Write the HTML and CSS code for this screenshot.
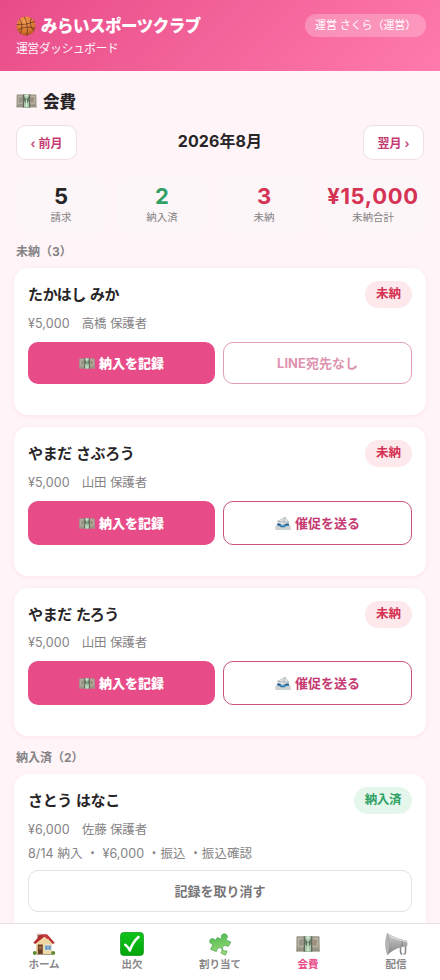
FILE: index.html
```html
<!DOCTYPE html>
<html lang="ja">
<head>
<meta charset="utf-8">
<meta name="viewport" content="width=device-width, initial-scale=1">
<title>会費</title>
<link rel="stylesheet" href="styles.css">
</head>
<body>
<svg class="defs" aria-hidden="true">
  <defs>
    <radialGradient id="ball-fill" cx=".45" cy=".3" r=".8"><stop offset="0" stop-color="#f7a055"/><stop offset=".6" stop-color="#db7630"/><stop offset="1" stop-color="#9a4518"/></radialGradient>
    <linearGradient id="green-fill" x1="0" y1="0" x2="0" y2="1"><stop offset="0" stop-color="#10c51b"/><stop offset="1" stop-color="#04a50c"/></linearGradient>
    <linearGradient id="puzzle-fill" x1="0" y1="0" x2=".4" y2="1"><stop offset="0" stop-color="#43b649"/><stop offset="1" stop-color="#98d878"/></linearGradient>
    <linearGradient id="horn-fill" x1="0" y1="0" x2="0" y2="1"><stop offset="0" stop-color="#d6d6d6"/><stop offset=".5" stop-color="#a8a8a8"/><stop offset="1" stop-color="#858585"/></linearGradient>
    <symbol id="ball" viewBox="0 0 20 20">
      <circle cx="10" cy="10" r="9.5" fill="url(#ball-fill)"/>
      <path d="M8.200.7Q12.500 8 11 19.400M.6 8.500Q9 9.500 19 5.500M3.300 3.400Q8 8 4.300 17.500M15.300 2.200Q12.500 9 18 15M1.800 14.200Q9 9 18.800 12.500" fill="none" stroke="#4d2c1c" stroke-width=".65"/>
    </symbol>
    <symbol id="money" viewBox="0 0 22 15">
      <path d="M.5.500h21l.3 14H.2z" fill="#a5a293"/>
      <path d="M1.200 1.300h19.600v9.700H1.200z" fill="#b9b6a6" stroke="#8b8877" stroke-width=".6"/>
      <path d="M.4 12.300h21.200M.3 13.500h21.400" stroke="#858171" stroke-width=".5"/>
      <path d="M2.500 4l4-1.500.5 6-4 1.500z" fill="#99958a"/><path d="M15.500 3l4 1-1 5.500-3.500-1z" fill="#a08d7c"/>
      <path d="M7 .5h8v14H7z" fill="#62685a"/>
      <path d="M8.300.5h5.400v14H8.300z" fill="#abc9ac"/>
      <path d="M9.300.5h3.400l-1.700 3z" fill="#dcebd9"/>
      <path d="M8.500 2.500l2.500 4 2.500-4v5l-2.500 3.500L8.500 7.500z" fill="#57705b"/>
      <path d="M10.300 6.500h1.400v7.800h-1.400z" fill="#d0ebce"/>
    </symbol>
    <symbol id="mail" viewBox="0 0 20 18">
      <path d="M1 12.500L3.500 8.500h13l2.500 4v4.500H1z" fill="#cfd4d8"/>
      <path d="M2.500 9h14.500l1 4-5.500 2H5z" fill="#1c5687"/>
      <path d="M3.500 11l7.500 3 6-2-2-1.500z" fill="#2f86bd"/>
      <path d="M3 6.200L12.500 1l5 6.500-8.500 4z" fill="#dee1e3" stroke="#a7aeb4" stroke-width=".6"/>
      <path d="M3 6.200l7.800 1L12.500 1M10.800 7.200l6.700.3" fill="none" stroke="#929ca4" stroke-width=".7"/>
      <path d="M.5 11.800h4.500l3 2h4l3-2h4.500v5.400H.5z" fill="#cdd2d5"/>
    </symbol>
    <symbol id="home" viewBox="0 0 24 24">
      <path d="M4 10.500L12 4l8 6.500V22H4z" fill="#eed7a3"/>
      <path d="M5.500 2.500h3.200v5H5.500z" fill="#a84b3f"/>
      <path d="M5 1.500h4.200v1.400H5z" fill="#d6c3ad"/>
      <path d="M1.300 10.700L8.800 2.400h6.500l7.500 8.600-2 1L14.200 5l-2-.2L3.200 12z" fill="#b52d31"/>
      <path d="M9 2.500h5.500L18 7l-3 0L12 4z" fill="#c8393c"/>
      <path d="M5.800 12.500h5v9.500h-5z" fill="#6f3e26"/><path d="M7 14.200h2.600v3H7z" fill="#9d7050"/>
      <path d="M12.800 13h6.400v5.300h-6.400z" fill="#5e91bf" stroke="#f5f1e3" stroke-width=".8"/>
      <path d="M16 13v5.300" stroke="#f5f1e3" stroke-width=".6"/>
      <circle cx="2.800" cy="21" r="2" fill="#5c8e31"/><circle cx="21.200" cy="21" r="2" fill="#5c8e31"/>
      <path d="M5 22.500h15" stroke="#a5a091"/>
    </symbol>
    <symbol id="check" viewBox="0 0 24 24">
      <rect x=".6" y=".6" width="22.800" height="22.800" rx="3" fill="url(#green-fill)" stroke="#079710" stroke-width=".8"/>
      <path d="M5.300 12.800Q7.800 14.500 9.800 18.500Q12.800 10 18.500 5" fill="none" stroke="#fff" stroke-width="2.500" stroke-linecap="round" stroke-linejoin="round"/>
    </symbol>
    <symbol id="puzzle" viewBox="0 0 24 24">
      <path d="M7.500 5.300L11 6.500c1-.4.300-1.300.3-2.400C11.400 1.800 13 .7 15 1c2.200.4 3 2.300 2 4-.6 1-.8 1.700.3 2.200l4 1.200-1.700 4.200c-.5 1-1.500.2-2.500 0-2-.4-3.200.7-3.400 2.300-.2 2 1.200 3.200 3 3 1-.2 2-.5 1.900.6L17.300 22l-4-1.300c-1-.5-.6-1.200-.1-2 .7-1.500 0-3-1.600-3.400-1.800-.4-3 .5-3.200 2.200-.1 1 .1 2-1 1.800L2 17.800l1.500-4.300c.4-.9-.2-1.100-1.200-1.300C.6 11.800-.2 10.200.4 8.600c.6-1.500 2.300-2.200 3.700-1.400.8.4 1.500 1.400 2 .5z" transform="rotate(6 12 12) translate(1.200 .5)" fill="url(#puzzle-fill)" stroke="#4ca652" stroke-width=".7"/>
    </symbol>
    <symbol id="horn" viewBox="0 0 24 24">
      <path d="M16.500 13.500v6q0 2 1.700 2.800M21.500 13v7.500q0 1.500-2 1.800" fill="none" stroke="#8a8a8a" stroke-width="1.600"/>
      <path d="M3.500 1C10 5 16 7.300 22.500 8.500q1.800 3 .2 6C15 15 8.500 18 3.500 23z" fill="url(#horn-fill)"/>
      <path d="M3.500 1Q7.500 12 3.500 23Q-.500 12 3.500 1z" fill="#b5b5b5" stroke="#9a9a9a" stroke-width=".5"/>
      <path d="M17.500 7.500q1.800 4 0 7.500" fill="none" stroke="#747474" stroke-width=".7"/>
      <path d="M6.500 4.500q7 3.500 15.500 5" fill="none" stroke="#e4e4e4"/>
    </symbol>
  </defs>
</svg>
<div class="app">
  <header class="header">
    <div>
      <div class="brand"><svg class="brand-icon"><use href="#ball"/></svg><span>みらいスポーツクラブ</span></div>
      <div class="subtitle">運営ダッシュボード</div>
    </div>
    <div class="user">運営 さくら（運営）</div>
  </header>
  <main class="main">
    <h1 class="title"><svg class="title-icon"><use href="#money"/></svg>会費</h1>
    <div class="month">
      <button class="month-btn">‹ 前月</button>
      <div class="month-label">2026年8月</div>
      <button class="month-btn">翌月 ›</button>
    </div>
    <div class="stats">
      <div class="stat"><b>5</b><span>請求</span></div>
      <div class="stat good"><b>2</b><span>納入済</span></div>
      <div class="stat bad"><b>3</b><span>未納</span></div>
      <div class="stat bad"><b class="total">¥15,000</b><span>未納合計</span></div>
    </div>
    <h2 class="section">未納（3）</h2>
    <section class="card compact">
      <div class="card-head"><div class="name">たかはし みか</div><span class="badge">未納</span></div>
      <div class="meta">¥5,000<span class="guardian">高橋 保護者</span></div>
      <div class="actions">
        <button class="btn primary"><svg class="btn-icon"><use href="#money"/></svg><span>納入を記録</span></button>
        <button class="btn outline disabled" disabled><span>LINE宛先なし</span></button>
      </div>
    </section>
    <section class="card">
      <div class="card-head"><div class="name">やまだ さぶろう</div><span class="badge">未納</span></div>
      <div class="meta">¥5,000<span class="guardian">山田 保護者</span></div>
      <div class="actions">
        <button class="btn primary"><svg class="btn-icon"><use href="#money"/></svg><span>納入を記録</span></button>
        <button class="btn outline"><svg class="btn-icon mail"><use href="#mail"/></svg><span>催促を送る</span></button>
      </div>
    </section>
    <section class="card last">
      <div class="card-head"><div class="name">やまだ たろう</div><span class="badge">未納</span></div>
      <div class="meta">¥5,000<span class="guardian">山田 保護者</span></div>
      <div class="actions">
        <button class="btn primary"><svg class="btn-icon"><use href="#money"/></svg><span>納入を記録</span></button>
        <button class="btn outline"><svg class="btn-icon mail"><use href="#mail"/></svg><span>催促を送る</span></button>
      </div>
    </section>
    <h2 class="section paid-section">納入済（2）</h2>
    <section class="card paid">
      <div class="card-head"><div class="name">さとう はなこ</div><span class="badge done">納入済</span></div>
      <div class="meta">¥6,000<span class="guardian">佐藤 保護者</span></div>
      <div class="meta record">8/14 納入 ・ ¥6,000 ・振込 ・振込確認</div>
      <button class="btn undo"><span>記録を取り消す</span></button>
    </section>
  </main>
  <nav class="tabs">
    <a class="tab"><svg><use href="#home"/></svg><span>ホーム</span></a>
    <a class="tab"><svg><use href="#check"/></svg><span>出欠</span></a>
    <a class="tab"><svg><use href="#puzzle"/></svg><span>割り当て</span></a>
    <a class="tab active"><svg><use href="#money"/></svg><span>会費</span></a>
    <a class="tab"><svg><use href="#horn"/></svg><span>配信</span></a>
  </nav>
</div>
</body>
</html>
```
FILE: styles.css
```css
* { box-sizing: border-box; }
body {
  margin: 0;
  font-family: Inter, "Noto Sans CJK JP", sans-serif;
  color: #272527;
  background: #fff4f8;
}
button { font-family: inherit; margin: 0; }
.defs { position: absolute; width: 0; height: 0; }
.app { height: 980px; display: flex; flex-direction: column; overflow: hidden; }

.header {
  flex: none;
  height: 71px;
  padding: 14px 14px 0 16px;
  display: flex;
  justify-content: space-between;
  align-items: flex-start;
  color: #fff;
  background: linear-gradient(135deg, #e84c88, #ff7aad);
}
.brand { display: flex; align-items: center; gap: 5px; height: 24px; line-height: 24px; font-size: 16.500px; font-weight: 800; letter-spacing: -.5px; white-space: nowrap; }
.brand-icon { width: 20px; height: 20px; }
.subtitle { height: 20px; line-height: 21px; font-size: 12px; letter-spacing: -.65px; opacity: .92; }
.user {
  width: 121px;
  height: 23px;
  line-height: 22px;
  padding-left: 10px;
  border-radius: 12px;
  font-size: 11px;
  letter-spacing: -.1px;
  white-space: nowrap;
  background: rgba(255, 255, 255, .25);
}

.main { flex: 1; min-height: 0; overflow: hidden; padding: 18px 14px 0; }
.title { margin: 0 2px; height: 24px; display: flex; align-items: center; gap: 6px; font-size: 16.500px; font-weight: 800; }
.title-icon { width: 21px; height: 14px; }
.month { margin: 12px 2px 0; display: flex; justify-content: space-between; }
.month-btn {
  width: 61px;
  height: 35px;
  padding: 0 0 1px;
  border: 1px solid #eee0e6;
  border-radius: 10px;
  background: #fff;
  color: #c53a70;
  font-size: 12px;
  font-weight: 600;
}
.month-label { line-height: 33px; font-size: 16px; font-weight: 700; letter-spacing: .1px; }

.stats { margin: 17px 0 0 2px; display: grid; grid-template-columns: 90px 92px 92px 1fr; gap: 10px; }
.stat { height: 56px; padding-top: 5px; border-radius: 10px; text-align: center; background: #fdf6f8; }
.stat b { display: block; height: 28px; line-height: 28px; font-size: 22px; font-weight: 700; white-space: nowrap; }
.stat .total { letter-spacing: .7px; }
.stat span { display: block; line-height: 15px; font-size: 10.500px; color: #858385; }
.good b { color: #32a166; }
.bad b { color: #d53354; }

.section { margin: 9px 2px 7px; height: 19px; line-height: 19px; font-size: 12px; font-weight: 700; color: #858385; }
.card {
  height: 149px;
  margin-bottom: 12px;
  padding: 13px 14px 0;
  border-radius: 14px;
  background: #fff;
  box-shadow: 0 1px 4px rgba(232, 76, 136, .09);
}
.card.compact { height: 147px; }
.card.last { height: 148px; }
.card.last .meta { margin-top: 4px; }
.paid-section { margin-top: 10px; }
.card.paid { height: 190px; }
.card-head { height: 27px; display: flex; justify-content: space-between; }
.name { line-height: 27px; font-size: 15px; font-weight: 600; letter-spacing: -.35px; word-spacing: .5px; }
.badge {
  height: 27px;
  line-height: 26px;
  padding: 0 11px;
  border-radius: 14px;
  font-size: 12.500px;
  font-weight: 700;
  color: #d53354;
  background: #fde8ec;
}
.badge.done { color: #32a166; background: #e5f7ed; letter-spacing: -.4px; }
.meta { margin-top: 5px; height: 20px; line-height: 21px; font-size: 12.500px; letter-spacing: .1px; color: #858385; }
.guardian { margin-left: 12px; letter-spacing: -.1px; }
.record { margin-top: 4px; white-space: pre; }
.actions { margin-top: 9px; display: grid; grid-template-columns: 187px 1fr; gap: 8px; }
.btn {
  height: 44px;
  padding: 0;
  display: flex;
  align-items: center;
  justify-content: center;
  gap: 4px;
  border-radius: 10px;
  font-size: 13px;
  font-weight: 700;
}
.btn span { padding-bottom: 2px; }
.compact .btn { height: 42px; }
.btn-icon { width: 16px; height: 11px; }
.btn-icon.mail { height: 15px; }
.primary { border: 0; color: #fff; background: #e84c88; }
.primary span { font-weight: 800; }
.outline { border: 1px solid #cb4f80; color: #c53a70; background: #fff; }
.disabled { opacity: .55; }
.undo { width: 100%; height: 42px; margin-top: 7px; border: 1px solid #e3e1e3; color: #777577; background: #fff; }

.tabs { flex: none; height: 57px; display: grid; grid-template-columns: repeat(5, 1fr); border-top: 1px solid #e5dfe2; background: #fff; }
.tab { display: flex; flex-direction: column; align-items: center; padding-top: 8px; font-size: 10.500px; font-weight: 600; color: #898789; }
.tab svg { width: 24px; height: 24px; }
.tab span { height: 16px; line-height: 17px; }
.tab.active { color: #e84c88; }
```
